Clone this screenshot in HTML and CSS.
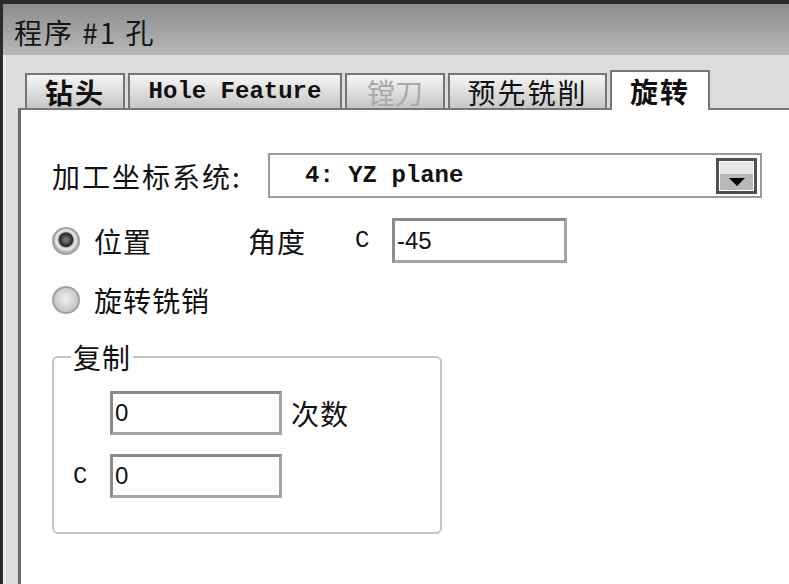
FILE: index.html
```html
<!DOCTYPE html>
<html lang="zh-CN">
  <head>
    <meta charset="UTF-8" />
    <meta name="viewport" content="width=device-width, initial-scale=1.0" />
    <title>程序 #1 孔</title>
    <link rel="stylesheet" href="styles.css">
  </head>
  <body>
    <div class="window">
      <div class="titlebar">程序 #1 孔</div>

      <div class="client">
        <div class="tabs">
          <div class="tab tab-drill bold">钻头</div>
          <div class="tab tab-hole">Hole Feature</div>
          <div class="tab tab-bore disabled">镗刀</div>
          <div class="tab tab-pre">预先铣削</div>
          <div class="tab tab-rot bold active">旋转</div>
        </div>

        <div class="pane">
          <!-- 加工坐标系 -->
          <div class="row row-wcs">
            <span class="label wcs-label">加工坐标系统:</span>
            <div class="combo">
              <span class="combo-text">4: YZ plane</span>
              <span class="combo-btn">
                <svg width="16" height="8" viewBox="0 0 16 8"><path d="M0 0 H16 L8 8 Z" fill="#000"/></svg>
              </span>
            </div>
          </div>

          <div class="row row-pos">
            <div class="option opt-pos"><span class="radio on"></span><span>位置</span></div>
            <span class="label angle-label">角度</span>
            <span class="axis">C</span>
            <input class="field field-angle" type="text" value="-45" readonly>
          </div>

          <div class="row row-mill">
            <div class="option"><span class="radio"></span><span>旋转铣销</span></div>
          </div>

          <!-- 复制 -->
          <fieldset class="copy">
            <legend>复制</legend>
            <div class="copy-grid">
              <span></span>
              <input class="field" type="text" value="0" readonly>
              <span class="label count-label">次数</span>
              <span class="axis copy-axis">C</span>
              <input class="field" type="text" value="0" readonly>
              <span></span>
            </div>
          </fieldset>
        </div>
      </div>
    </div>
  </body>
</html>
```

FILE: styles.css
```css
body {
  margin: 0;
  background-color: #fff;
  font-family: "Noto Sans CJK SC", "Liberation Sans", sans-serif;
  color: #111;
  overflow: hidden;
}

.window {
  width: 789px;
  height: 584px;
  box-sizing: border-box;
  border-top: 4px solid #2b2b2b;
  border-left: 3px solid #2b2b2b;
  display: flex;
  flex-direction: column;
}

.titlebar {
  height: 51px;
  box-sizing: border-box;
  padding: 6px 0 0 11px;
  line-height: 45px;
  font-size: 28px;
  letter-spacing: 2px;
  background: linear-gradient(#8c8c8c, #b8b8b8);
  color: #151515;
}

.client {
  flex: 1;
  display: flex;
  flex-direction: column;
  background-color: #dcdcdc;
  padding: 15px 0 0 15px;
  box-shadow: inset 3px 0 0 #ececec;
}

/* 탭 */
.tabs {
  display: flex;
  align-items: flex-end;
  gap: 3px;
  padding-left: 7px;
  height: 38px;
}

.tab {
  height: 35px;
  box-sizing: border-box;
  border: 2px solid #757575;
  border-bottom: none;
  background: linear-gradient(#f6f6f6, #c6c6c6);
  display: flex;
  align-items: center;
  justify-content: center;
  font-size: 28px;
  line-height: 1;
}

.tab.bold {
  font-weight: bold;
  letter-spacing: 2px;
}

.tab-drill { width: 100px; }
.tab-bore { width: 100px; }
.tab-pre { width: 159px; letter-spacing: 2px; }

.tab-hole {
  width: 214px;
  font-family: "Liberation Mono", monospace;
  font-size: 24px;
  font-weight: bold;
}

.tab.disabled {
  color: #a9a9a9;
}

.tab.active {
  width: 100px;
  height: 40px;
  margin-bottom: -2px;
  background: #fff;
  position: relative;
  z-index: 1;
}

.pane {
  flex: 1;
  background-color: #fff;
  border-left: 3px solid #6c6c6c;
  border-top: 2px solid #777;
  padding: 43px 0 0 31px;
}

.row {
  display: flex;
  align-items: center;
}

.label {
  font-size: 28px;
  line-height: 30px;
  letter-spacing: 1px;
}

.row-wcs { height: 45px; }

.wcs-label {
  width: 216px;
  letter-spacing: 2px;
}

.combo {
  width: 494px;
  height: 45px;
  box-sizing: border-box;
  border: 2px solid #9a9a9a;
  display: flex;
  align-items: center;
  padding: 0 3px 0 35px;
}

.combo-text {
  flex: 1;
  font-family: "Liberation Mono", monospace;
  font-size: 24px;
  font-weight: bold;
}

.combo-btn {
  width: 41px;
  height: 36px;
  box-sizing: border-box;
  border: 3px solid #505050;
  box-shadow: inset 0 0 0 1px #fff;
  background: linear-gradient(#e6e6e6 0 45%, #b9b9b9 45%);
  display: flex;
  align-items: flex-end;
  justify-content: center;
  padding-bottom: 5px;
}

.row-pos {
  height: 45px;
  margin-top: 20px;
}

.row-mill {
  height: 30px;
  margin-top: 22px;
}

.option {
  display: flex;
  align-items: center;
  gap: 14px;
  font-size: 28px;
  line-height: 30px;
  letter-spacing: 1px;
}

.opt-pos { width: 196px; }
.angle-label { width: 107px; }

.radio {
  width: 28px;
  height: 28px;
  box-sizing: border-box;
  border-radius: 50%;
  border: 2px solid #a2a2a2;
  background: radial-gradient(circle at 50% 45%, #f2f2f2, #c4c4c4 70%, #b0b0b0);
}

.radio.on {
  background: radial-gradient(circle at 50% 45%, #707070 0 2px, #2c2c2c 6px, #3a3a3a 7px, #cfcfcf 8px, #e9e9e9 10px, #b6b6b6 12px);
}

.axis {
  width: 37px;
  font-family: "Liberation Mono", monospace;
  font-size: 24px;
}

.field {
  height: 45px;
  box-sizing: border-box;
  margin: 0;
  padding: 0 0 0 2px;
  border: 3px solid #8a8a8a;
  border-right-color: #a4a4a4;
  border-bottom-color: #a4a4a4;
  background: #fff;
  font-family: "Liberation Sans", sans-serif;
  font-size: 24px;
  color: #111;
  outline: none;
}

.field-angle { width: 175px; }

/* 복제 그룹 */
.copy {
  width: 390px;
  box-sizing: border-box;
  margin: 27px 0 0 0;
  padding: 0 0 34px 0;
  border: 2px solid #c4c4c4;
  border-radius: 6px;
}

.copy legend {
  margin-left: 17px;
  padding: 0 2px;
  font-size: 28px;
  line-height: 30px;
  letter-spacing: 1px;
}

.copy-grid {
  margin-top: 19px;
  display: grid;
  grid-template-columns: 56px 172px auto;
  grid-template-rows: 44px 44px;
  row-gap: 19px;
  align-items: center;
}

.copy-grid .field {
  width: 172px;
  height: 44px;
}

.copy-axis {
  padding-left: 19px;
}

.count-label {
  margin-left: 9px;
}
```
